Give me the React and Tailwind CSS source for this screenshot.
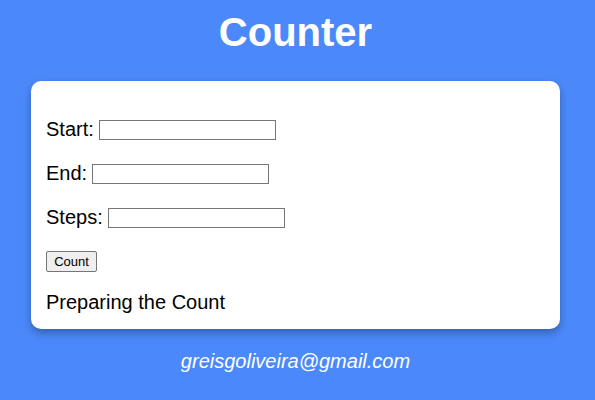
export default function App() {
  return (
    <div className="min-h-screen bg-[#4b89fa] font-['Liberation_Sans',Arial,sans-serif] flex flex-col items-center pr-[4px]">
      {/* Title */}
      <h1 className="mt-[9px] text-[40px] leading-[46px] font-bold text-white">Counter</h1>

      {/* Card */}
      <div className="mt-[26px] w-[529px] h-[248px] bg-white rounded-[10px] shadow-[0_4px_8px_rgba(0,0,0,0.3)] px-[15px] pt-[37px] flex flex-col text-[20px] leading-[23px] text-black">
        <div className="flex items-center gap-[5px] h-[23px]">
          <label>Start:</label>
          <input type="text" className="w-[177px] h-[20px] border border-[#767676] bg-white" />
        </div>
        <div className="mt-[21px] flex items-center gap-[5px] h-[23px]">
          <label>End:</label>
          <input type="text" className="w-[177px] h-[20px] border border-[#767676] bg-white" />
        </div>
        <div className="mt-[21px] flex items-center gap-[5px] h-[23px]">
          <label>Steps:</label>
          <input type="text" className="w-[177px] h-[20px] border border-[#767676] bg-white" />
        </div>
        <div className="mt-[22px] flex">
          <button className="w-[51px] h-[21px] text-[13px] leading-[15px] bg-[#efefef] border border-[#767676] rounded-[2px] text-black">
            Count
          </button>
        </div>
        <p className="mt-[19px]">Preparing the Count</p>
      </div>

      {/* Footer */}
      <p className="mt-[21px] text-[20px] leading-[23px] italic text-white">greisgoliveira@gmail.com</p>
    </div>
  )
}
